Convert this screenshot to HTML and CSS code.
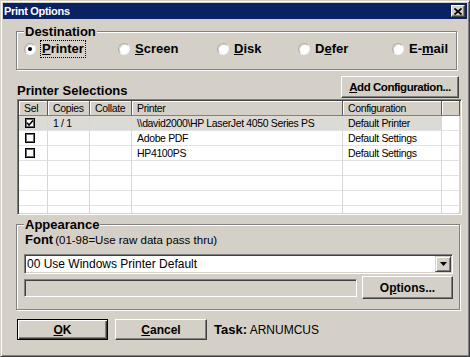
FILE: index.html
```html
<!DOCTYPE html>
<html lang="en">
<head>
<meta charset="utf-8">
<title>Print Options</title>
<link rel="stylesheet" href="styles.css">
</head>
<body>
<div class="window">
	<div class="titlebar">
		<span class="title">Print Options</span>
		<span class="close">
			<svg width="8" height="7" viewBox="0 0 8 7"><path d="M0.5 0.5 L7.5 6.5 M7.5 0.5 L0.5 6.5" stroke="#000" stroke-width="1.7" fill="none"/></svg>
		</span>
	</div>

	<div class="dialog">

		<fieldset class="group dest">
			<legend>Destination</legend>
			<div class="radios">
				<label class="radio"><span class="dot on"></span><span class="focus"><u>P</u>rinter</span></label>
				<label class="radio"><span class="dot"></span><span><u>S</u>creen</span></label>
				<label class="radio"><span class="dot"></span><span><u>D</u>isk</span></label>
				<label class="radio"><span class="dot"></span><span>D<u>e</u>fer</span></label>
				<label class="radio"><span class="dot"></span><span>E-<u>m</u>ail</span></label>
			</div>
		</fieldset>

		<div class="sel-head">
			<span class="heading">Printer Selections</span>
			<button class="btn add"><u>A</u>dd Configuration...</button>
		</div>

		<!-- printer list -->
		<div class="grid">
			<div class="row head">
				<div class="cell">Sel</div>
				<div class="cell">Copies</div>
				<div class="cell">Collate</div>
				<div class="cell">Printer</div>
				<div class="cell">Configuration</div>
				<div class="cell"></div>
			</div>
			<div class="row current">
				<div class="cell"><span class="check"><svg width="8" height="8" viewBox="0 0 8 8"><path d="M1 3.8 L3 6 L7 1.5" stroke="#000" stroke-width="1.6" fill="none"/></svg></span></div>
				<div class="cell">1 / 1</div>
				<div class="cell"></div>
				<div class="cell">\\david2000\HP LaserJet 4050 Series PS</div>
				<div class="cell">Default Printer</div>
				<div class="cell"></div>
			</div>
			<div class="row">
				<div class="cell"><span class="check"></span></div>
				<div class="cell"></div>
				<div class="cell"></div>
				<div class="cell">Adobe PDF</div>
				<div class="cell">Default Settings</div>
				<div class="cell"></div>
			</div>
			<div class="row">
				<div class="cell"><span class="check"></span></div>
				<div class="cell"></div>
				<div class="cell"></div>
				<div class="cell">HP4100PS</div>
				<div class="cell">Default Settings</div>
				<div class="cell"></div>
			</div>
			<div class="row"><div class="cell"></div><div class="cell"></div><div class="cell"></div><div class="cell"></div><div class="cell"></div><div class="cell"></div></div>
			<div class="row"><div class="cell"></div><div class="cell"></div><div class="cell"></div><div class="cell"></div><div class="cell"></div><div class="cell"></div></div>
			<div class="row"><div class="cell"></div><div class="cell"></div><div class="cell"></div><div class="cell"></div><div class="cell"></div><div class="cell"></div></div>
			<div class="row"><div class="cell"></div><div class="cell"></div><div class="cell"></div><div class="cell"></div><div class="cell"></div><div class="cell"></div></div>
		</div>

		<fieldset class="group look">
			<legend>Appearance</legend>
			<div class="font-line"><b>Font</b><span>(01-98=Use raw data pass thru)</span></div>
			<div class="combo">
				<span class="combo-text">00 Use Windows Printer Default</span>
				<span class="drop"><svg width="7" height="4" viewBox="0 0 7 4"><path d="M0 0 H7 L3.5 4 Z" fill="#000"/></svg></span>
			</div>
			<div class="opt-row">
				<div class="field"></div>
				<button class="btn opt">O<u>p</u>tions...</button>
			</div>
		</fieldset>

		<div class="actions">
			<button class="btn default ok"><u>O</u>K</button>
			<button class="btn cancel"><u>C</u>ancel</button>
			<span class="task"><b>Task:</b> ARNUMCUS</span>
		</div>

	</div>
</div>
</body>
</html>
```

FILE: styles.css
```css
body {
	margin: 0;
	font-family: "Liberation Sans", Arial, sans-serif;
	color: #000;
}

.window {
	width: 470px;
	height: 357px;
	box-sizing: border-box;
	background: #d4d0c8;
	border: 1px solid;
	border-color: #d4d0c8 #404040 #404040 #d4d0c8;
	box-shadow: inset 1px 1px #fff, inset -1px -1px #808080;
	padding: 2px;
	display: flex;
	flex-direction: column;
}

/* title bar */
.titlebar {
	height: 16px;
	flex: none;
	background: #0a2262;
	color: #fff;
	display: flex;
	align-items: center;
	justify-content: space-between;
	padding: 0 2px 0 1px;
}
.title {
	font-size: 11px;
	font-weight: bold;
	letter-spacing: -0.3px;
}
.close {
	width: 14px;
	height: 12px;
	box-sizing: border-box;
	background: #d4d0c8;
	border: 1px solid;
	border-color: #fff #404040 #404040 #fff;
	box-shadow: inset -1px -1px #808080;
	display: flex;
	align-items: center;
	justify-content: center;
}

.dialog {
	display: flex;
	flex-direction: column;
	align-items: flex-start;
	padding-left: 13px;
}

/* group boxes */
.group {
	margin: 0;
	min-width: 0;
	box-sizing: border-box;
	border: 1px solid #808080;
	box-shadow: inset 1px 1px #fff, 1px 1px #fff;
}
.group legend {
	font-size: 13px;
	font-weight: bold;
	line-height: 15px;
	padding: 0 1px;
	background: #d4d0c8;
}
.dest {
	width: 441px;
	margin-top: 5px;
	padding: 2px 7px 12px;
}
.look {
	width: 444px;
	margin-top: 2px;
	padding: 0 6px 10px 7px;
}

/* radio buttons */
.radios {
	display: grid;
	grid-template-columns: 94px 99px 81px 94px auto;
	font-size: 13px;
	font-weight: bold;
	line-height: 16px;
}
.radio {
	display: flex;
	align-items: center;
	gap: 5px;
}
.dot {
	width: 12px;
	height: 12px;
	box-sizing: border-box;
	border-radius: 50%;
	background: #fff;
	border: 1px solid;
	border-color: #b0aca4 #f4f4f4 #f4f4f4 #b0aca4;
	box-shadow: inset 1px 1px #d8d6d0;
	display: flex;
	align-items: center;
	justify-content: center;
}
.dot.on::after {
	content: "";
	width: 4px;
	height: 4px;
	border-radius: 50%;
	background: #000;
}
.focus {
	outline: 1px dotted #000;
	padding: 0 1px;
}

/* printer selections */
.sel-head {
	width: 442px;
	margin: 6px 0 0 1px;
	display: flex;
	align-items: flex-end;
	justify-content: space-between;
}
.heading {
	font-size: 13px;
	font-weight: bold;
	line-height: 15px;
}

.btn {
	font-family: "Liberation Sans", Arial, sans-serif;
	font-size: 12px;
	font-weight: bold;
	color: #000;
	background: #d4d0c8;
	border: 1px solid;
	border-color: #fff #404040 #404040 #fff;
	box-shadow: inset -1px -1px #808080;
	padding: 0;
}
.btn.add {
	width: 118px;
	height: 22px;
	font-size: 11.5px;
	letter-spacing: -0.45px;
}
.btn.default {
	border-color: #000;
	box-shadow: inset 1px 1px #fff, inset -1px -1px #404040, inset -2px -2px #808080;
}

.grid {
	width: 445px;
	height: 116px;
	margin: 1px 0 0 1px;
	box-sizing: border-box;
	border: 1px solid;
	border-color: #808080 #fff #fff #808080;
	box-shadow: inset 1px 1px #404040, inset -1px -1px #d4d0c8;
	padding: 1px;
	background: #fff;
	overflow: hidden;
}
.row {
	display: grid;
	grid-template-columns: 29px 42px 42px 211px 99px 18px;
	height: 15px;
	font-size: 10.5px;
	letter-spacing: -0.35px;
	line-height: 14px;
}
.cell {
	box-sizing: border-box;
	border-right: 1px solid #d6d6d6;
	border-bottom: 1px solid #e2e2e2;
	padding-left: 5px;
	white-space: nowrap;
	overflow: hidden;
	display: flex;
	align-items: center;
}
.head .cell {
	background: #d4d0c8;
	border-right: 1px solid #5a5a5a;
	border-bottom: 1px solid #808080;
	box-shadow: inset 1px 1px #fff;
}
.current .cell {
	background: #dcdad5;
}
.current .cell:last-child {
	background: #fff;
}
.check {
	width: 10px;
	height: 10px;
	box-sizing: border-box;
	border: 1px solid #000;
	box-shadow: inset 0 0 0 1px #6a6a6a;
	background: #fff;
	margin-left: 1px;
	display: flex;
	align-items: center;
	justify-content: center;
}

/* appearance */
.font-line {
	line-height: 15px;
	padding-left: 1px;
	display: flex;
	align-items: baseline;
}
.font-line b {
	font-size: 13px;
}
.font-line span {
	font-size: 11.5px;
	margin-left: 2px;
}
.combo {
	width: 429px;
	height: 20px;
	margin-top: 6px;
	box-sizing: border-box;
	background: #fff;
	border: 1px solid;
	border-color: #808080 #fff #fff #808080;
	box-shadow: inset 1px 1px #404040, inset -1px -1px #d4d0c8;
	padding: 1px;
	display: flex;
	align-items: center;
	justify-content: space-between;
}
.combo-text {
	font-size: 12px;
	padding-left: 1px;
}
.drop {
	width: 16px;
	height: 16px;
	box-sizing: border-box;
	background: #d4d0c8;
	border: 1px solid;
	border-color: #d4d0c8 #404040 #404040 #d4d0c8;
	box-shadow: inset 1px 1px #fff, inset -1px -1px #808080;
	display: flex;
	align-items: center;
	justify-content: center;
}
.opt-row {
	width: 429px;
	margin-top: 2px;
	display: flex;
	align-items: center;
	gap: 5px;
}
.field {
	width: 333px;
	height: 18px;
	box-sizing: border-box;
	background: #d4d0c8;
	border: 1px solid;
	border-color: #808080 #fff #fff #808080;
	box-shadow: inset 1px 1px #404040, inset -1px -1px #d4d0c8;
}
.btn.opt {
	width: 91px;
	height: 23px;
}

/* bottom buttons */
.actions {
	margin: 9px 0 0 1px;
	display: flex;
	align-items: center;
}
.btn.ok {
	width: 91px;
	height: 21px;
}
.btn.cancel {
	width: 92px;
	height: 21px;
	margin-left: 7px;
}
.task {
	margin-left: 7px;
	font-size: 12px;
}
.task b {
	font-size: 13px;
}
```
